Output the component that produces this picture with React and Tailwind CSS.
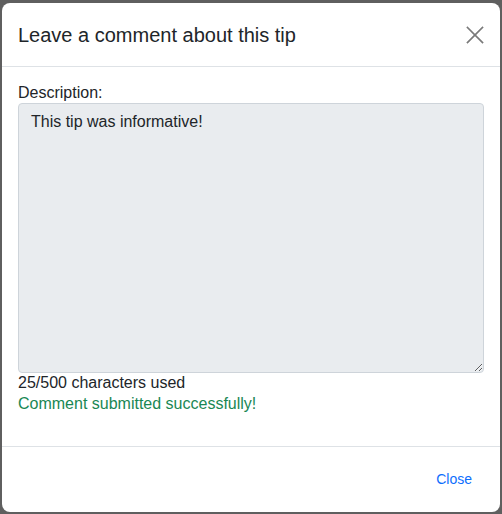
export default function App() {
    return (
        <div className="w-[502px] h-[514px] bg-[#5f5f5f] flex items-start justify-center pt-[3px] px-[2px] font-['Liberation_Sans',Arial,sans-serif]">
            <div className="w-full h-[509px] bg-white rounded-[8px] flex flex-col overflow-hidden">
                <div className="flex items-center justify-between px-4 h-[64px] border-b border-[#dee2e6]">
                    <h2 className="text-[20px] leading-[24px] text-[#212529]">Leave a comment about this tip</h2>
                    <button type="button">
                        <svg width="18" height="18" viewBox="0 0 18 18" fill="none" stroke="#7a7a7a" strokeWidth="1.7" strokeLinecap="square">
                            <line x1="1.5" y1="1.5" x2="16.5" y2="16.5" />
                            <line x1="16.5" y1="1.5" x2="1.5" y2="16.5" />
                        </svg>
                    </button>
                </div>

                <div className="flex-1 px-4 pt-4 text-[16px] text-[#212529]">
                    <label className="block leading-[20px]">Description:</label>
                    <textarea
                        readOnly
                        value="This tip was informative!"
                        className="block w-full h-[270px] px-3 py-[6px] leading-[24px] bg-[#e9ecef] border border-[#ced4da] rounded-[4px] text-[#212529] outline-none resize-y"
                    />
                    <p className="leading-[20px]">25/500 characters used</p>
                    <p className="leading-[21px] text-[#198754]">Comment submitted successfully!</p>
                </div>

                <div className="h-[66px] border-t border-[#dee2e6] flex items-center justify-end pr-[28px]">
                    <button type="button" className="text-[14px] text-[#0d6efd]">Close</button>
                </div>
            </div>
        </div>
    );
}
